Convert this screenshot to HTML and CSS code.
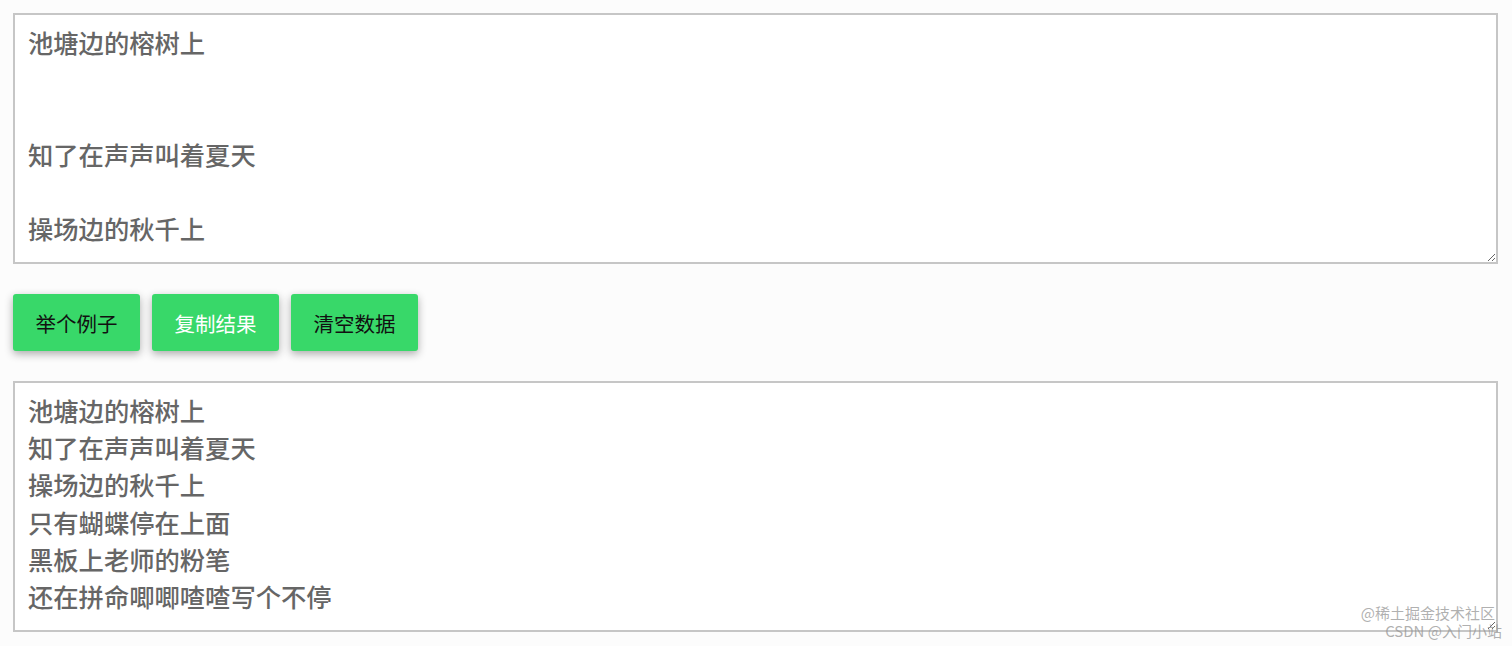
FILE: index.html
```html
<!DOCTYPE html>
<html lang="zh-CN">
<head>
<meta charset="utf-8">
<title>文本去空行</title>
<link rel="stylesheet" href="styles.css">
</head>
<body>
<main class="page">
<textarea class="box">池塘边的榕树上


知了在声声叫着夏天

操场边的秋千上</textarea>
<div class="actions">
<button class="btn">举个例子</button>
<button class="btn btn-light">复制结果</button>
<button class="btn">清空数据</button>
</div>
<textarea class="box">池塘边的榕树上
知了在声声叫着夏天
操场边的秋千上
只有蝴蝶停在上面
黑板上老师的粉笔
还在拼命唧唧喳喳写个不停</textarea>
</main>
<div class="watermark">
<span class="wm1">@稀土掘金技术社区</span>
<span class="wm2">CSDN @入门小站</span>
</div>
</body>
</html>
```
FILE: styles.css
```css
html, body {
  margin: 0;
  padding: 0;
  background: #fcfcfc;
}
.page {
  padding: 13px 14px 0 13px;
  display: flex;
  flex-direction: column;
  gap: 30px;
}
.box {
  box-sizing: border-box;
  width: 100%;
  height: 251px;
  border: 2px solid #c6c6c6;
  background: #ffffff;
  padding: 9px 13px;
  font-family: "Noto Sans CJK SC", "Noto Sans", sans-serif;
  font-size: 25.3px;
  font-weight: 500;
  line-height: 37.2px;
  color: #666666;
  outline: none;
  resize: vertical;
  overflow: hidden;
  margin: 0;
  display: block;
}
.actions {
  display: flex;
  gap: 12px;
}
.btn {
  width: 127px;
  height: 57px;
  background: #38d869;
  border: none;
  border-radius: 3px;
  box-shadow: 0 3px 9px rgba(0, 0, 0, 0.32);
  font-family: "Noto Sans CJK SC", "Noto Sans", sans-serif;
  font-size: 20.5px;
  color: #111111;
  padding: 0;
  cursor: pointer;
}
.btn-light {
  color: #ffffff;
}
.watermark {
  position: absolute;
  right: 12px;
  top: 604px;
  display: flex;
  flex-direction: column;
  align-items: flex-end;
  font-family: "Noto Sans CJK SC", sans-serif;
  font-size: 15px;
  line-height: 18px;
  color: rgba(150, 150, 150, 0.75);
  pointer-events: none;
}
.wm1 {
  margin-right: 5px;
}
.wm2 {
  margin-right: -2px;
}
```
